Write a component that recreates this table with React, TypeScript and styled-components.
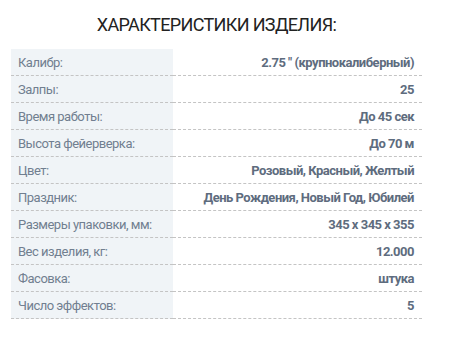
import * as React from 'react';
import styled, { createGlobalStyle } from 'styled-components';

const GlobalStyle = createGlobalStyle`
  body {
    margin: 0;
    background: #fff;
    font-family: Roboto, "Liberation Sans", Arial, sans-serif;
  }
`;

const Section = styled.section`
  width: 411px;
  padding: 14px 0 0 11px;
`;

const Title = styled.h2`
  margin: 0 0 13px;
  font-size: 18px;
  line-height: 22px;
  font-weight: 400;
  letter-spacing: -0.65px;
  color: #222;
  text-align: center;
  text-transform: uppercase;
`;

const Table = styled.table`
  width: 411px;
  table-layout: fixed;
  border-collapse: separate;
  border-spacing: 0;
  font-size: 13px;
  letter-spacing: -0.5px;
`;

const LabelCol = styled.col`
  width: 162px;
`;

const Label = styled.td`
  height: 26px;
  padding: 0 0 0 7px;
  background: #f0f4f7;
  color: #717f90;
  border-bottom: 1px dashed #c4c4c4;
  vertical-align: middle;
  white-space: nowrap;
`;

const Value = styled.td`
  height: 26px;
  padding: 0 8px 0 0;
  text-align: right;
  font-weight: 700;
  color: #5e6c7e;
  border-bottom: 1px dashed #c4c4c4;
  vertical-align: middle;
  white-space: nowrap;
`;

const specs: [string, string][] = [
  ['Калибр:', '2.75 " (крупнокалиберный)'],
  ['Залпы:', '25'],
  ['Время работы:', 'До 45 сек'],
  ['Высота фейерверка:', 'До 70 м'],
  ['Цвет:', 'Розовый, Красный, Желтый'],
  ['Праздник:', 'День Рождения, Новый Год, Юбилей'],
  ['Размеры упаковки, мм:', '345 x 345 x 355'],
  ['Вес изделия, кг:', '12.000'],
  ['Фасовка:', 'штука'],
  ['Число эффектов:', '5'],
];

const App: React.FC = () => {
  return (
    <>
      <GlobalStyle />
      <Section>
        <Title>Характеристики изделия:</Title>
        <Table>
          <colgroup>
            <LabelCol />
            <col />
          </colgroup>
          <tbody>
            {specs.map(([label, value]) => (
              <tr key={label}>
                <Label>{label}</Label>
                <Value>{value}</Value>
              </tr>
            ))}
          </tbody>
        </Table>
      </Section>
    </>
  );
};

export default App;
